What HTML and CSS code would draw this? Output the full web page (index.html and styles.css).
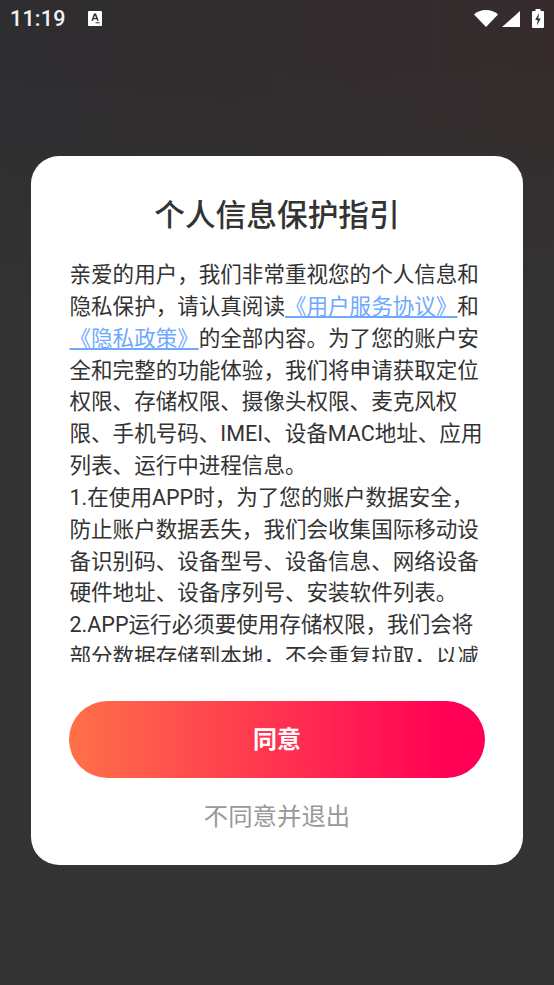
FILE: index.html
```html
<!DOCTYPE html>
<html lang="zh-CN">

<head>
    <meta charset="UTF-8" />
    <meta name="viewport" content="width=device-width, initial-scale=1.0" />
    <title>个人信息保护指引</title>
    <link rel="stylesheet" href="styles.css">
</head>

<body>
    <div class="screen">
        <div class="status-bar">
            <span class="status-time">11:19</span>
            <svg class="status-notice" viewBox="0 0 14 15">
                <path fill="#fff" d="M0 1a1 1 0 0 1 1-1h12a1 1 0 0 1 1 1v13a1 1 0 0 1-1 1H1a1 1 0 0 1-1-1z" />
                <path fill="#333" d="M6 2.500h2l2.700 7.200H9.100l-.5-1.500H5.400l-.5 1.500H3.300zM7 4.600 5.900 7h2.200zM7.500 11.300h4v1h-4z" />
            </svg>
            <div class="status-icons">
                <svg class="icon-wifi" viewBox="0 0 24 17">
                    <path fill="#fff" d="M0 4.500C3 1.700 7.300 0 12 0s9 1.700 12 4.500L12 17z" />
                </svg>
                <svg class="icon-signal" viewBox="0 0 18 16">
                    <path fill="#fff" d="M18 0v16H0z" />
                </svg>
                <svg class="icon-battery" viewBox="0 0 12 19">
                    <path fill="#fff" d="M3.500 0h5v2H11a1 1 0 0 1 1 1v15a1 1 0 0 1-1 1H1a1 1 0 0 1-1-1V3a1 1 0 0 1 1-1h2.500z" />
                    <path fill="#333" d="M7 4 3.200 11h2.500L5 16.500 8.800 9.500H6.300z" />
                </svg>
            </div>
        </div>

        <div class="privacy-dialog">
            <h2 class="dialog-title">个人信息保护指引</h2>
            <div class="dialog-text">
                <p>亲爱的用户，我们非常重视您的个人信息和隐私保护，请认真阅读<a class="dialog-link">《用户服务协议》</a>和<a class="dialog-link">《隐私政策》</a>的全部内容。为了您的账户安全和完整的功能体验，我们将申请获取定位权限、存储权限、摄像头权限、麦克风权限、手机号码、IMEI、设备MAC地址、应用列表、运行中进程信息。</p>
                <p>1.在使用APP时，为了您的账户数据安全，防止账户数据丢失，我们会收集国际移动设备识别码、设备型号、设备信息、网络设备硬件地址、设备序列号、安装软件列表。</p>
                <p>2.APP运行必须要使用存储权限，我们会将部分数据存储到本地，不会重复拉取，以减少流量消耗。</p>
            </div>
            <button class="btn-agree">同意</button>
            <button class="btn-refuse">不同意并退出</button>
        </div>
    </div>
</body>

</html>
```

FILE: styles.css
```css
* {
    box-sizing: border-box;
}

body {
    margin: 0;
    font-family: Roboto, "Noto Sans CJK SC", sans-serif;
    background-color: #333;
}

.screen {
    height: 985px;
    overflow: hidden;
    background: linear-gradient(180deg, rgba(51, 51, 51, 0) 60px, #333 300px), linear-gradient(90deg, #2e2d30, #352b2c);
}

.status-bar {
    display: flex;
    align-items: center;
    height: 37px;
    padding: 0 10px 0 10px;
    color: #fff;
}

.status-time {
    font-size: 21.500px;
    font-weight: 500;
    letter-spacing: 0.2px;
    color: #f2f2f2;
}

.status-notice {
    width: 14px;
    height: 15px;
    margin-left: 22px;
}

.status-icons {
    display: flex;
    align-items: center;
    margin-left: auto;
}

.icon-wifi {
    width: 24px;
    height: 17px;
}

.icon-signal {
    width: 18px;
    height: 16px;
    margin-left: 4px;
}

.icon-battery {
    width: 12px;
    height: 19px;
    margin-left: 12px;
}

.privacy-dialog {
    display: flex;
    flex-direction: column;
    width: 492px;
    height: 709px;
    margin: 119px 0 0 31px;
    padding: 39px 38px 0;
    background-color: #fff;
    border-radius: 28px;
}

.dialog-title {
    margin: 0;
    font-size: 30.700px;
    line-height: 42px;
    font-weight: 500;
    color: #333;
    text-align: center;
}

.dialog-text {
    height: 404px;
    margin-top: 21px;
    padding: 1px 0 0 0.5px;
    overflow: hidden;
    font-size: 21.550px;
    line-height: 31.850px;
    color: #333;
}

.dialog-text p {
    margin: 0;
}

.dialog-link {
    color: #6ea9ff;
    text-decoration: underline;
    text-underline-offset: 2px;
}

.btn-agree {
    height: 77px;
    margin-top: 39px;
    padding: 0 0 4px;
    border: none;
    border-radius: 39px;
    background: linear-gradient(90deg, #ff7049, #ff0055 92%);
    font-family: inherit;
    font-size: 24px;
    font-weight: 700;
    color: #fff;
}

.btn-refuse {
    margin-top: 22px;
    padding: 0;
    border: none;
    background: none;
    font-family: inherit;
    font-size: 24.400px;
    line-height: 34px;
    color: #999;
}
```
